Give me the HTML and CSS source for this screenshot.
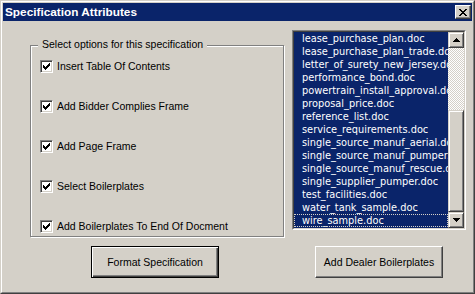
FILE: index.html
```html
<!DOCTYPE html>
<html>
<head>
    <title>Specification Attributes</title>
    <link rel="stylesheet" href="styles.css">
</head>
<body>
<div class="window">
    <div class="frame">
        <div class="titlebar">
            <span class="title">Specification Attributes</span>
            <button class="close" type="button">
                <svg width="8" height="7" viewBox="0 0 8 7" shape-rendering="crispEdges"><path d="M0 0h2v1h-2z M6 0h2v1h-2z M1 1h2v1h-2z M5 1h2v1h-2z M2 2h4v1h-4z M3 3h2v1h-2z M2 4h4v1h-4z M1 5h2v1h-2z M5 5h2v1h-2z M0 6h2v1h-2z M6 6h2v1h-2z" fill="#000"/></svg>
            </button>
        </div>

        <div class="client">
            <div class="group">
                <span class="group-title">Select options for this specification</span>
                <label class="option"><span class="check"><svg width="7" height="7" viewBox="0 0 7 7" shape-rendering="crispEdges"><path d="M6 0h1v1h-1z M5 1h2v1h-2z M0 2h1v1h-1z M4 2h3v1h-3z M0 3h2v1h-2z M3 3h3v1h-3z M0 4h5v1h-5z M1 5h3v1h-3z M2 6h1v1h-1z" fill="#000"/></svg></span>Insert Table Of Contents</label>
                <label class="option"><span class="check"><svg width="7" height="7" viewBox="0 0 7 7" shape-rendering="crispEdges"><path d="M6 0h1v1h-1z M5 1h2v1h-2z M0 2h1v1h-1z M4 2h3v1h-3z M0 3h2v1h-2z M3 3h3v1h-3z M0 4h5v1h-5z M1 5h3v1h-3z M2 6h1v1h-1z" fill="#000"/></svg></span>Add Bidder Complies Frame</label>
                <label class="option"><span class="check"><svg width="7" height="7" viewBox="0 0 7 7" shape-rendering="crispEdges"><path d="M6 0h1v1h-1z M5 1h2v1h-2z M0 2h1v1h-1z M4 2h3v1h-3z M0 3h2v1h-2z M3 3h3v1h-3z M0 4h5v1h-5z M1 5h3v1h-3z M2 6h1v1h-1z" fill="#000"/></svg></span>Add Page Frame</label>
                <label class="option"><span class="check"><svg width="7" height="7" viewBox="0 0 7 7" shape-rendering="crispEdges"><path d="M6 0h1v1h-1z M5 1h2v1h-2z M0 2h1v1h-1z M4 2h3v1h-3z M0 3h2v1h-2z M3 3h3v1h-3z M0 4h5v1h-5z M1 5h3v1h-3z M2 6h1v1h-1z" fill="#000"/></svg></span>Select Boilerplates</label>
                <label class="option"><span class="check"><svg width="7" height="7" viewBox="0 0 7 7" shape-rendering="crispEdges"><path d="M6 0h1v1h-1z M5 1h2v1h-2z M0 2h1v1h-1z M4 2h3v1h-3z M0 3h2v1h-2z M3 3h3v1h-3z M0 4h5v1h-5z M1 5h3v1h-3z M2 6h1v1h-1z" fill="#000"/></svg></span>Add Boilerplates To End Of Docment</label>
            </div>

            <div class="listbox">
                <div class="listbox-inner">
                    <ul class="items">
                        <li>lease_purchase_plan.doc</li>
                        <li>lease_purchase_plan_trade.doc</li>
                        <li>letter_of_surety_new_jersey.doc</li>
                        <li>performance_bond.doc</li>
                        <li>powertrain_install_approval.doc</li>
                        <li>proposal_price.doc</li>
                        <li>reference_list.doc</li>
                        <li>service_requirements.doc</li>
                        <li>single_source_manuf_aerial.doc</li>
                        <li>single_source_manuf_pumper.doc</li>
                        <li>single_source_manuf_rescue.doc</li>
                        <li>single_supplier_pumper.doc</li>
                        <li>test_facilities.doc</li>
                        <li>water_tank_sample.doc</li>
                        <li class="focus">wire_sample.doc</li>
                    </ul>
                    <div class="scrollbar">
                        <div class="sb-btn"><svg width="7" height="4" viewBox="0 0 7 4" shape-rendering="crispEdges"><path d="M3 0h1v1h-1z M2 1h3v1h-3z M1 2h5v1h-5z M0 3h7v1h-7z" fill="#000"/></svg></div>
                        <div class="sb-track"><div class="sb-thumb"></div></div>
                        <div class="sb-btn"><svg width="7" height="4" viewBox="0 0 7 4" shape-rendering="crispEdges"><path d="M0 0h7v1h-7z M1 1h5v1h-5z M2 2h3v1h-3z M3 3h1v1h-1z" fill="#000"/></svg></div>
                    </div>
                </div>
            </div>

            <button class="btn btn-default btn-format" type="button">Format Specification</button>
            <button class="btn btn-dealer" type="button">Add Dealer Boilerplates</button>
        </div>
    </div>
</div>
</body>
</html>
```

FILE: styles.css
```css
body {
    margin: 0;
    background-color: #D4D0C8;
    font-family: "Liberation Sans", Arial, sans-serif;
    font-size: 10.5px;
    color: #000;
}
.window {
    width: 475px;
    height: 294px;
    box-sizing: border-box;
    border: 1px solid;
    border-color: #D4D0C8 #404040 #404040 #D4D0C8;
}
.frame {
    height: 100%;
    box-sizing: border-box;
    border: 1px solid;
    border-color: #fff #808080 #808080 #fff;
    padding: 1px;
    display: flex;
    flex-direction: column;
}
.titlebar {
    height: 18px;
    flex: none;
    background-color: #0A246A;
    color: #fff;
    font-weight: bold;
    font-size: 11.8px;
    display: flex;
    align-items: center;
    justify-content: space-between;
    padding: 0 1px 0 2px;
}
.close {
    width: 16px;
    height: 14px;
    box-sizing: border-box;
    padding: 0;
    border: 1px solid;
    border-color: #fff #404040 #404040 #fff;
    box-shadow: inset -1px -1px #808080;
    background-color: #D4D0C8;
    display: flex;
    align-items: center;
    justify-content: center;
}
.client {
    flex: 1;
    display: grid;
    grid-template-columns: 254px 174px;
    grid-template-rows: 216px 32px;
    column-gap: 8px;
    padding: 9px 0 0 27px;
}

/* option group */
.group {
    position: relative;
    margin-top: 15px;
    height: 192px;
    box-sizing: border-box;
    border: 1px solid #808080;
    box-shadow: 1px 1px 0 #fff, inset 1px 1px 0 #fff;
    padding: 14px 0 0 9px;
    display: flex;
    flex-direction: column;
    gap: 27px;
}
.group-title {
    position: absolute;
    top: -8px;
    left: 7px;
    padding: 0 4px;
    line-height: 13px;
    background-color: #D4D0C8;
}
.option {
    display: flex;
    align-items: center;
    gap: 4px;
    height: 13px;
    line-height: 13px;
}
.check {
    width: 13px;
    height: 13px;
    box-sizing: border-box;
    border: 1px solid;
    border-color: #808080 #fff #fff #808080;
    box-shadow: inset 1px 1px #404040, inset -1px -1px #D4D0C8;
    background-color: #fff;
    display: flex;
    align-items: center;
    justify-content: center;
}

/* list box */
.listbox {
    height: 200px;
    box-sizing: border-box;
    border: 1px solid;
    border-color: #808080 #fff #fff #808080;
}
.listbox-inner {
    height: 100%;
    box-sizing: border-box;
    border: 1px solid;
    border-color: #404040 #D4D0C8 #D4D0C8 #404040;
    display: flex;
}
.items {
    flex: 1;
    min-width: 0;
    margin: 0;
    padding: 0;
    list-style: none;
    background-color: #0A246A;
    overflow: hidden;
    font-family: "DejaVu Sans", sans-serif;
    font-size: 9.8px;
}
.items li {
    height: 13px;
    line-height: 13px;
    padding-left: 8px;
    color: #fff;
    white-space: nowrap;
}
.items li.focus {
    outline: 1px dotted #D4D0C8;
    outline-offset: -1px;
}
.scrollbar {
    width: 16px;
    display: flex;
    flex-direction: column;
}
.sb-btn {
    height: 16px;
    box-sizing: border-box;
    border: 1px solid;
    border-color: #D4D0C8 #404040 #404040 #D4D0C8;
    box-shadow: inset 1px 1px #fff, inset -1px -1px #808080;
    background-color: #D4D0C8;
    display: flex;
    align-items: center;
    justify-content: center;
}
.sb-track {
    flex: 1;
    display: flex;
    flex-direction: column;
    background: repeating-conic-gradient(#fff 0 25%, #D4D0C8 0 50%) 0 0 / 2px 2px;
}
.sb-thumb {
    flex: 1;
    margin-top: 62px;
    box-sizing: border-box;
    border: 1px solid;
    border-color: #D4D0C8 #404040 #404040 #D4D0C8;
    box-shadow: inset 1px 1px #fff, inset -1px -1px #808080;
    background-color: #D4D0C8;
}

/* buttons */
.btn {
    width: 128px;
    height: 32px;
    box-sizing: border-box;
    padding: 0;
    font-family: "Liberation Sans", Arial, sans-serif;
    font-size: 10.5px;
    color: #000;
    background-color: #D4D0C8;
    border: 1px solid;
    border-color: #fff #404040 #404040 #fff;
    box-shadow: inset -1px -1px #808080;
}
.btn-default {
    border-color: #000;
    box-shadow: inset 1px 1px #fff, inset -1px -1px #404040, inset -2px -2px #808080;
}
.btn-format {
    justify-self: start;
    margin-left: 61px;
}
.btn-dealer {
    justify-self: center;
}
```
